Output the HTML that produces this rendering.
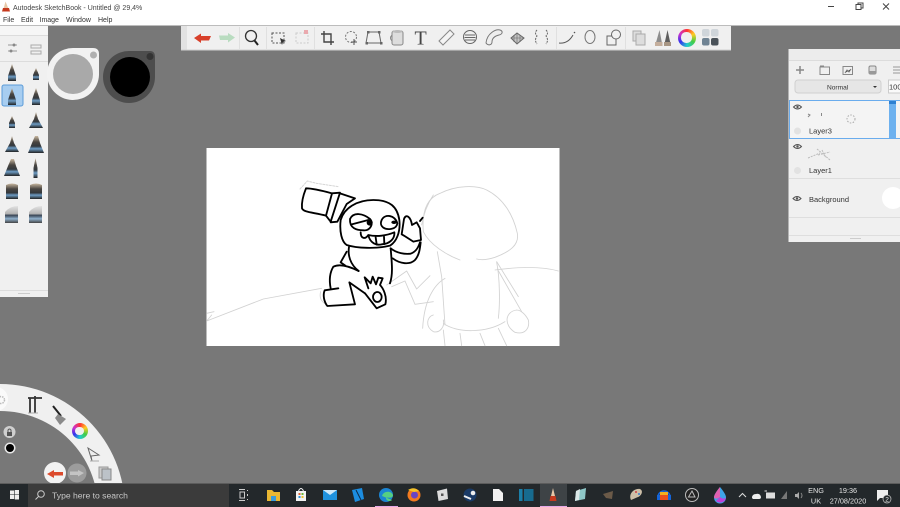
<!DOCTYPE html>
<html><head><meta charset="utf-8"><style>
html,body{margin:0;padding:0;width:900px;height:507px;overflow:hidden;background:#787878}
svg{position:absolute;left:0;top:0;font-family:"Liberation Sans",sans-serif;filter:blur(.35px)}
.w{position:absolute;border-radius:50%;background:conic-gradient(#f33,#fc2,#4c4,#2cc,#33e,#c3c,#f33);filter:blur(.3px)}
.w i{position:absolute;border-radius:50%;background:#f0f0f0;left:22%;top:22%;width:56%;height:56%}
</style></head><body>
<svg width="900" height="507" viewBox="0 0 900 507">
<defs>
<linearGradient id="bt" x1="0" y1="0" x2="0" y2="1"><stop offset="0" stop-color="#c9b8a0"/><stop offset=".35" stop-color="#4a4642"/><stop offset=".6" stop-color="#33383d"/><stop offset=".75" stop-color="#6d9cc4"/><stop offset="1" stop-color="#222"/></linearGradient>
<linearGradient id="bw" x1="0" y1="0" x2="0" y2="1"><stop offset="0" stop-color="#e2e2e2"/><stop offset=".45" stop-color="#b4b4b4"/><stop offset=".55" stop-color="#3a4656"/><stop offset=".75" stop-color="#8fb0cc"/><stop offset="1" stop-color="#444"/></linearGradient>
<g id="p1"><path d="M0-9L4 3V8H-4V3Z" fill="url(#bt)"/></g>
<g id="p2"><path d="M0-5L3 2V7H-3V2Z" fill="url(#bt)"/></g>
<g id="p3"><path d="M0-9L2-2L7 7H-7L-2-2Z" fill="url(#bt)"/></g>
<g id="p4"><path d="M-1-9H2L4-2L8 8H-8L-4-2Z" fill="url(#bt)"/></g>
<g id="p5"><path d="M-6-7Q0-10 6-7V7H-6Z" fill="url(#bt)"/></g>
<g id="p6"><path d="M-7-3Q-2-9 6-9V8H-7Z" fill="url(#bw)"/></g>
</defs>

<rect width="900" height="507" fill="#787878"/>

<!-- title bar -->
<rect width="900" height="25.5" fill="#fff"/>
<path d="M5.500 1.500L8 7.500L9.500 11H2.500L4 7Z" fill="#e8c8a8"/><path d="M3 8H9L10 11.500H2Z" fill="#c63a1e"/>
<text x="13" y="9.800" font-size="7" fill="#444">Autodesk SketchBook - Untitled @ 29,4%</text>
<g font-size="7" fill="#333"><text x="3" y="22">File</text><text x="21" y="22">Edit</text><text x="39.500" y="22">Image</text><text x="66" y="22">Window</text><text x="98" y="22">Help</text></g>
<g stroke="#444" stroke-width="1" fill="none"><path d="M828 6.500H834"/><rect x="856" y="4.500" width="5" height="5"/><path d="M858 4.500V3H863V8H861"/><path d="M883 3.500L889 9.500M889 3.500L883 9.500"/></g>

<!-- toolbar -->
<rect x="181" y="26" width="550" height="24.500" fill="#f0f0f0"/>
<rect x="181" y="26" width="6" height="24.500" fill="#e2e2e2"/>
<rect x="181" y="49.500" width="550" height="1" fill="#d0d0d0"/>
<g stroke="#e0e0e0" stroke-width="1"><path d="M239.500 27V49M266.500 27V49M314.500 27V49M556.500 27V49M625.500 27V49"/></g>
<path d="M194 38L201 33.500V36H211L209 40.500H201V43Z" fill="#d8402a"/>
<path d="M235 37.500L228 33V35.500H219L220 40H228V42.500Z" fill="#b9dcc0"/>
<circle cx="251" cy="36" r="5.500" fill="none" stroke="#333" stroke-width="1.300"/><path d="M254.500 40.500L258 45" stroke="#222" stroke-width="2"/>
<rect x="272" y="33" width="12" height="10" fill="none" stroke="#555" stroke-dasharray="2 1.500"/><path d="M280 38L286 41L283 42L282 45Z" fill="#333"/>
<rect x="296" y="33" width="12" height="10" fill="none" stroke="#ccc" stroke-dasharray="2 1.500"/><rect x="304" y="30" width="4" height="4" fill="#eaa9ae"/>
<path d="M324 31V42H334M321 34H331V45" fill="none" stroke="#444" stroke-width="1.400"/>
<circle cx="351" cy="37" r="5.500" fill="none" stroke="#777" stroke-dasharray="2 1.500"/><path d="M354 39V45M351 42H357" stroke="#555"/>
<path d="M368 32H379L381 43H366Z" fill="none" stroke="#666"/><g fill="#666"><rect x="367" y="31" width="2.500" height="2.500"/><rect x="378" y="31" width="2.500" height="2.500"/><rect x="365.500" y="42" width="2.500" height="2.500"/><rect x="380" y="42" width="2.500" height="2.500"/></g>
<rect x="392" y="31" width="11" height="14" rx="2" fill="#ddd" stroke="#888"/><path d="M392 35Q389 38 392 41" fill="none" stroke="#888"/><ellipse cx="397.500" cy="31.500" rx="5" ry="1.500" fill="#bbb"/>
<text x="414.500" y="44.500" font-family="Liberation Serif" font-size="20" fill="#444">T</text>
<path d="M439 41L450 30L454 34L443 45Z" fill="#f4f4f4" stroke="#888"/>
<circle cx="470" cy="37" r="6.500" fill="none" stroke="#666"/><path d="M465 35H475M464.500 37.500H475.500M465 40H475" stroke="#666"/>
<path d="M486 43C487 33 496 29 500 30C503 31 503 34 499 35C495 36 492 38 492 42C492 45 488 46 486 43Z" fill="#eee" stroke="#777"/>
<path d="M511 38L517 33L524 38L517 44Z" fill="#c4c4c4" stroke="#666"/><path d="M514 35V42M517 33V44M520 35V42M511 38H524" stroke="#666" stroke-width=".6"/>
<path d="M537 30Q534 33 537 36Q534 40 537 44M546 30Q549 33 546 36Q549 40 546 44" fill="none" stroke="#666" stroke-dasharray="2 1"/>
<path d="M559 43Q568 44 573 35" fill="none" stroke="#555"/><circle cx="574.500" cy="32.500" r=".8" fill="#555"/>
<ellipse cx="590" cy="37" rx="5" ry="6.500" fill="none" stroke="#777"/>
<rect x="607" y="36" width="9" height="9" fill="none" stroke="#666"/><circle cx="616" cy="34.500" r="4.500" fill="#f0f0f0" stroke="#666"/>
<g fill="#ddd" stroke="#aaa"><rect x="633" y="31" width="8" height="10"/><rect x="636" y="34" width="9" height="11"/></g>
<path d="M655 46L659.500 30L662.500 46Z" fill="#8d8d8d"/><path d="M664 46L667.500 30L671 46Z" fill="#5e5e5e"/><path d="M655 42H662.500V46H655Z" fill="#c4ae9c"/><path d="M664 42H671V46H664Z" fill="#a89684"/>
<g><rect x="702" y="29" width="7.500" height="7.500" rx="2" fill="#cfd5da"/><rect x="711" y="29" width="7.500" height="7.500" rx="2" fill="#cfd5da"/><rect x="702" y="38" width="7.500" height="7.500" rx="2" fill="#6f8393"/><rect x="711" y="38" width="7.500" height="7.500" rx="2" fill="#4a5259"/></g>

<!-- left panel -->
<rect x="0" y="26" width="48" height="271" fill="#f0f0f0"/>
<rect x="0" y="26" width="48" height="9" fill="#f6f6f6"/>
<path d="M0 35.500H48M0 61.500H48M0 290.500H48" stroke="#dcdcdc"/>
<path d="M8 45H17M8 51H17" stroke="#999"/><circle cx="14" cy="45" r="1.500" fill="#888"/><circle cx="11" cy="51" r="1.500" fill="#888"/>
<path d="M31 45H41V48H31ZM31 51H41V54H31Z" fill="none" stroke="#aaa"/>
<rect x="2" y="85" width="21" height="21" rx="2" fill="#a7cdf0" stroke="#5b9bd8"/>
<use href="#p1" x="12" y="73"/><use href="#p2" x="36" y="73"/>
<use href="#p1" x="12" y="97"/><use href="#p1" x="36" y="97"/>
<use href="#p2" x="12" y="121"/><use href="#p3" x="36" y="121"/>
<use href="#p3" x="12" y="145"/><use href="#p4" x="36" y="145"/>
<use href="#p4" x="12" y="168"/><path d="M35.500 158L37.500 168V178H33.500V168Z" fill="url(#bt)"/>
<use href="#p5" x="12" y="192"/><use href="#p5" x="36" y="192"/>
<use href="#p6" x="12" y="215"/><use href="#p6" x="36" y="215"/>
<rect x="18" y="293" width="12" height="1" fill="#ccc"/>

<!-- pucks -->
<path d="M74 48H93Q99 48 99 54V75A26 26 0 1 1 74 48Z" fill="#f2f2f2"/>
<circle cx="73" cy="74" r="20" fill="#a9a9a9"/><circle cx="93.500" cy="55" r="3.500" fill="#b0b0b0"/>
<path d="M130 51H150Q155 51 155 57V77A26 26 0 1 1 130 51Z" fill="#4d4d4d"/>
<circle cx="130" cy="77" r="20" fill="#000"/><circle cx="150" cy="56.500" r="3.500" fill="#333"/>

<!-- canvas -->
<rect x="206.500" y="148" width="353" height="198" fill="#fff"/>
<g transform="translate(200 145) scale(.33333)" fill="none" stroke-linecap="round" stroke-linejoin="round">
<g stroke="#d2d2d2" stroke-width="2.600">
<path d="M20 528L190 462L365 430"/><path d="M20 505L42 500M20 528L35 510"/>
<path d="M560 420L620 378L650 432L690 392"/><path d="M575 425L615 408L645 478L700 470"/>
<path d="M362 440Q355 465 378 478"/>
<path d="M670 260C665 200 680 160 720 145C770 120 830 120 860 135C910 160 940 210 952 265C958 300 930 320 885 337C860 345 840 345 830 342M780 345C740 330 690 300 670 260"/>
<path d="M712 320L725 395L735 540M890 352C900 400 900 480 895 520"/>
<path d="M890 350L955 455M892 372L965 500"/>
<path d="M735 400C700 420 672 470 668 550"/><path d="M700 510C680 515 675 545 700 560C720 565 735 545 730 525"/>
<path d="M950 495C915 500 910 540 945 562C975 570 990 550 985 525C975 505 960 495 950 495"/>
<path d="M730 535C770 565 860 565 915 530"/>
<path d="M730 555L735 602M780 565L785 602M840 565L855 602M895 550L920 602"/>
<path d="M885 375C960 365 1030 365 1075 378"/>
<path d="M665 240C670 210 680 180 700 150"/>
</g>
<path d="M300 132L322 108L350 115L415 125" stroke="#d6d6d6" stroke-width="3" stroke-dasharray="6 4"/>
<g stroke="#000" stroke-width="5.500">
<path d="M318 130C310 150 304 170 306 190C310 202 340 202 378 212L396 145C370 138 340 130 318 130Z"/>
<path d="M396 145L420 143L392 230L378 212M420 145L465 160L440 177L412 230L392 232"/>
<path d="M422 225C432 190 470 165 520 165C570 165 592 185 598 225C602 260 590 290 570 302C530 312 470 310 440 300C425 290 418 260 422 225Z"/>
<path d="M450 222C460 200 490 205 510 222C523 236 510 258 490 256C470 256 448 250 450 222Z"/>
<path d="M455 238L505 225"/>
<path d="M545 225C555 205 585 210 592 235C590 255 560 255 550 248C540 240 542 232 545 225Z"/>
<path d="M482 262C482 280 495 285 505 270C530 276 560 272 583 262C585 280 570 297 545 298C530 302 510 295 505 270"/>
<path d="M527 277L530 298M552 275L553 297"/>
<path d="M447 306C443 330 450 358 476 378M572 310C575 350 580 385 570 415"/>
<path d="M440 320L422 352L436 362"/>
<path d="M572 310C590 325 615 328 632 326C648 320 655 308 660 292M578 340C600 357 630 360 645 345C658 330 660 310 662 292"/>
<path d="M612 222C618 205 632 215 636 240L650 232L660 250L663 285L640 290L612 272L605 268Z"/>
<path d="M660 228L668 218"/>
<path d="M476 378C450 365 420 355 400 365C388 385 388 410 392 430"/>
<path d="M374 436L415 430M374 436C368 450 372 470 382 483L465 478L448 412L495 445"/>
<path d="M495 445L530 490L556 478C562 455 550 430 540 420L548 400L535 398L528 418L518 395L512 415L494 397L505 430"/>
<ellipse cx="532" cy="456" rx="13" ry="15"/>
</g>
<g fill="#000"><ellipse cx="509" cy="233" rx="9" ry="9"/><ellipse cx="582" cy="232" rx="8" ry="5"/></g>
</g>

<!-- right panel -->
<rect x="788.500" y="49" width="112" height="193" fill="#f0f0f0"/>
<rect x="788.500" y="49" width="112" height="11" fill="#ececec"/>
<path d="M789 60.500H900" stroke="#dcdcdc"/>
<path d="M796 70H804M800 66V74" stroke="#888" stroke-width="1.500"/>
<rect x="820" y="67" width="9.500" height="7.500" fill="none" stroke="#888"/><path d="M820 66H824" stroke="#888"/>
<rect x="843" y="66.500" width="9.500" height="8" fill="none" stroke="#888"/><path d="M845 73L847 70L849 72L851 69" stroke="#777"/>
<rect x="869" y="66" width="7" height="8" rx="1.500" fill="#ddd" stroke="#888"/><rect x="869" y="71" width="7" height="3" fill="#999"/>
<path d="M893 67H900M893 70H900M893 73H900" stroke="#999"/>
<rect x="795" y="80" width="86" height="13" rx="3" fill="#e6e6e6" stroke="#d0d0d0"/>
<text x="827" y="89.500" font-size="6.600" fill="#333">Normal</text><path d="M873 86H877L875 88Z" fill="#333"/>
<rect x="888.500" y="80" width="14" height="13" fill="#fafafa" stroke="#ccc"/>
<text x="889" y="89.500" font-size="7.500" fill="#333">100</text>
<rect x="789.500" y="100.500" width="112" height="38" fill="#f4f4f4" stroke="#6aaced"/>
<rect x="889" y="101" width="7" height="37" fill="#6db1ef"/><rect x="889" y="101" width="7" height="3" fill="#2d80d2"/>
<path d="M789 178.500H900M789 217.500H900M789 235.500H900" stroke="#dedede"/>
<g fill="none" stroke="#555"><path d="M793.500 107Q797.500 103 801.500 107Q797.500 111 793.500 107Z"/><path d="M793.500 146.500Q797.500 142.500 801.500 146.500Q797.500 150.500 793.500 146.500Z"/><path d="M793 198.500Q797 194.500 801 198.500Q797 202.500 793 198.500Z"/></g>
<g fill="#555"><circle cx="797.500" cy="107" r="1.200"/><circle cx="797.500" cy="146.500" r="1.200"/><circle cx="797" cy="198.500" r="1.200"/></g>
<circle cx="797.500" cy="131" r="3.500" fill="#e2e2e2"/><circle cx="797.500" cy="170.500" r="3.500" fill="#e2e2e2"/>
<g font-size="7.500" fill="#333"><text x="809" y="133.500">Layer3</text><text x="809" y="173">Layer1</text><text x="809" y="202">Background</text></g>
<circle cx="851" cy="119" r="4" fill="none" stroke="#aaa" stroke-dasharray="1.500 1.500"/>
<path d="M808 114L810 115L808 117M821.500 113V116" stroke="#888" fill="none"/>
<path d="M808 158L820 153M817 149L830 160M822 150L826 158M818 155L830 152" stroke="#bbb" stroke-width="1" stroke-dasharray="2 1"/>
<circle cx="893" cy="198" r="11" fill="#fff"/>
<rect x="850" y="238" width="11" height="1" fill="#ccc"/>

<!-- radial menu -->
<path d="M0 384A125 125 0 0 1 125 509H98A98 98 0 0 0 0 411Z" fill="#f0f0f0"/>
<circle cx="-4" cy="399" r="12" fill="#fafafa"/>
<circle cx="1" cy="400" r="3.500" fill="none" stroke="#bbb" stroke-width="1.500" stroke-dasharray="1.500 1"/>
<path d="M28 398H42M30 398V413M35 396V413" stroke="#333" stroke-width="1.800"/><path d="M28 413H38" stroke="#aaa"/>
<path d="M53 406L61 416" stroke="#222" stroke-width="2"/><path d="M58 414L66 419L60 425L55 418Z" fill="#8a8a8a"/>
<path d="M88 448L99 455L91 456L92 461Z" fill="#eee" stroke="#666"/><path d="M90 461H99" stroke="#aaa"/>
<rect x="99" y="467" width="9" height="11" fill="#ccc" stroke="#999"/><rect x="102" y="469" width="9" height="11" fill="#bcc2c8" stroke="#888"/>
<circle cx="55" cy="473" r="11" fill="#f2f2f2"/><path d="M47 474L54 470V472H63V475.500H54V478Z" fill="#dc4a2c"/>
<circle cx="77" cy="473" r="9.500" fill="#9c9c9c"/><path d="M84 473L78 470V471.500H70V475H78V476.500Z" fill="#c4c4c4"/>
<circle cx="9.500" cy="432" r="6" fill="#cfcfcf"/><rect x="7" y="432" width="5" height="4" fill="#555"/><path d="M8 432V430Q9.500 428 11 430V432" stroke="#555" fill="none"/>
<circle cx="10" cy="448" r="5.500" fill="#e8e8e8"/><circle cx="10" cy="448" r="4" fill="#000"/>

<!-- taskbar -->
<rect x="0" y="484" width="900" height="23" fill="#23282b"/>
<rect x="0" y="483" width="900" height="1" fill="#5c5c5c"/>
<rect x="28" y="484" width="201" height="23" fill="#3b3b3b"/>
<g fill="#eee"><rect x="10" y="490.500" width="4.200" height="4"/><rect x="14.800" y="490" width="4.200" height="4.500"/><rect x="10" y="495" width="4.200" height="4"/><rect x="14.800" y="495" width="4.200" height="4.500"/></g>
<circle cx="41" cy="494" r="3.300" fill="none" stroke="#ccc"/><path d="M38.500 496.500L35.500 499.500" stroke="#ccc"/>
<text x="52" y="498.500" font-size="8.600" fill="#c8c8c8">Type here to search</text>
<g fill="none" stroke="#ccc"><rect x="240" y="492" width="4.500" height="6"/><path d="M239 489.500H245M239 500.500H245M247.500 490V491M247.500 494V496M247.500 499V500"/></g>
<path d="M267 490H272L274 492H280V501H267Z" fill="#eab732"/><rect x="271" y="496" width="5" height="5" fill="#3a9bdc"/>
<rect x="296" y="491" width="10" height="10" fill="#f2f2f2"/><path d="M298.500 491Q301 486 303.500 491" stroke="#f2f2f2" fill="none"/><g fill="#e06030"><rect x="298.500" y="493" width="2" height="2"/></g><rect x="301.500" y="493" width="2" height="2" fill="#6fba3a"/><rect x="298.500" y="496" width="2" height="2" fill="#2a90d8"/><rect x="301.500" y="496" width="2" height="2" fill="#f0c030"/>
<path d="M323 490H337V500H323Z" fill="#1f93e0"/><path d="M323 490L330 495L337 490Z" fill="#cfe9fb"/>
<path d="M352 490L362 488L364 499L355 502Z" fill="#1c8de0"/><path d="M356 490L361 500" stroke="#0b2a48"/>
<circle cx="386" cy="495" r="7" fill="#1b84d2"/><path d="M382 496C383 491 391 490 393 495C393 499 388 497 386 498C386 501 390 502 392 500" fill="#56cf82"/>
<circle cx="414" cy="495" r="6.500" fill="#f27a1f"/><circle cx="414.500" cy="495" r="3.500" fill="#6a45c4"/><path d="M408 490Q414 486 419 491L414 492Z" fill="#f5c42a"/>
<path d="M437 491L447 488.500L448 499L438.500 501Z" fill="#ddd"/><rect x="441" y="493.500" width="2.500" height="2.500" fill="#555"/>
<circle cx="470" cy="495" r="6.500" fill="#1a3a66"/><circle cx="473" cy="493" r="2.300" fill="#eee"/><path d="M464 496L471 499" stroke="#eee" stroke-width="2"/>
<path d="M493 489H499L503 493V501H493Z" fill="#f2f2f2"/>
<rect x="519" y="489" width="3.500" height="12" fill="#1b7fa8"/><rect x="524" y="489" width="9.500" height="12" fill="#176b8f"/>
<rect x="540" y="484" width="27" height="23" fill="#3e4346"/>
<path d="M553 488L556 500H550Z" fill="#e8c8a8"/><path d="M550.500 496H555.500L556.500 501H549.500Z" fill="#c63a1e"/>
<path d="M576 491L586 488L585 499L575 501Z" fill="#8fc8c8"/><path d="M576 491L580 489L579 500L575 501Z" fill="#dbe8e8"/>
<path d="M603 494L613 491L612 499L606 498Z" fill="#6b5a48"/>
<path d="M631 500C628 494 634 488 640 489C644 491 641 496 638 497Z" fill="#cdbfa8"/><circle cx="636" cy="492" r="1" fill="#d04040"/><circle cx="639" cy="494" r="1" fill="#3a80d0"/>
<path d="M658 497A6 6 0 0 1 670 497" fill="none" stroke="#1464d8" stroke-width="1.600"/><rect x="657" y="495" width="3" height="5" fill="#1464d8"/><rect x="668" y="495" width="3" height="5" fill="#1464d8"/><rect x="660" y="494" width="8" height="6" fill="#e8501c"/><rect x="660" y="492" width="8" height="3" fill="#f0b020"/>
<circle cx="692" cy="495" r="6.500" fill="#222" stroke="#bbb"/><path d="M692 491L695 497L688.500 497Z" fill="none" stroke="#bbb"/>
<path d="M720 487C724 492 726 495 726 497.500A6 6 0 0 1 714 497.500C714 495 716 492 720 487Z" fill="#3fa4e8"/><path d="M720 487C716 492 714 495 714 497.500Q716 500 720 497Z" fill="#e060b0"/><path d="M720 497Q724 500 726 497.500A6 6 0 0 1 716 501Z" fill="#c040d8"/>
<path d="M739 497L742.500 493.500L746 497" fill="none" stroke="#ddd"/>
<path d="M752 498Q752 494 756 494Q760 493 761 497Q761 499 759 499H753Z" fill="#eee"/>
<rect x="766" y="492.500" width="9" height="6" fill="#ddd"/><path d="M764.500 491H767" stroke="#ddd"/>
<path d="M781 499L787 491V499Z" fill="#777"/>
<path d="M795 494H797L799 492V499L797 497H795Z" fill="#aaa"/><path d="M801 493Q803 495.500 801 498" stroke="#888" fill="none"/>
<g font-size="7.300" fill="#e4e4e4" text-anchor="middle"><text x="816" y="493">ENG</text><text x="816" y="503.500">UK</text><text x="848" y="493">19:36</text><text x="848" y="503.500">27/08/2020</text></g>
<path d="M877 490H888V498H880L877 501Z" fill="#eee"/><circle cx="887" cy="499" r="4" fill="#23282b" stroke="#ccc" stroke-width=".7"/><text x="887" y="501.500" font-size="6.500" fill="#eee" text-anchor="middle">2</text>
<rect x="375" y="506" width="23" height="1" fill="#e6a8e8"/><rect x="540" y="506" width="27" height="1" fill="#e6a8e8"/>
</svg>
<div class="w" style="left:71.500px;top:423px;width:16px;height:16px"><i></i></div>
<div class="w" style="left:677.500px;top:28.500px;width:18px;height:18px"><i></i></div>
</body></html>
